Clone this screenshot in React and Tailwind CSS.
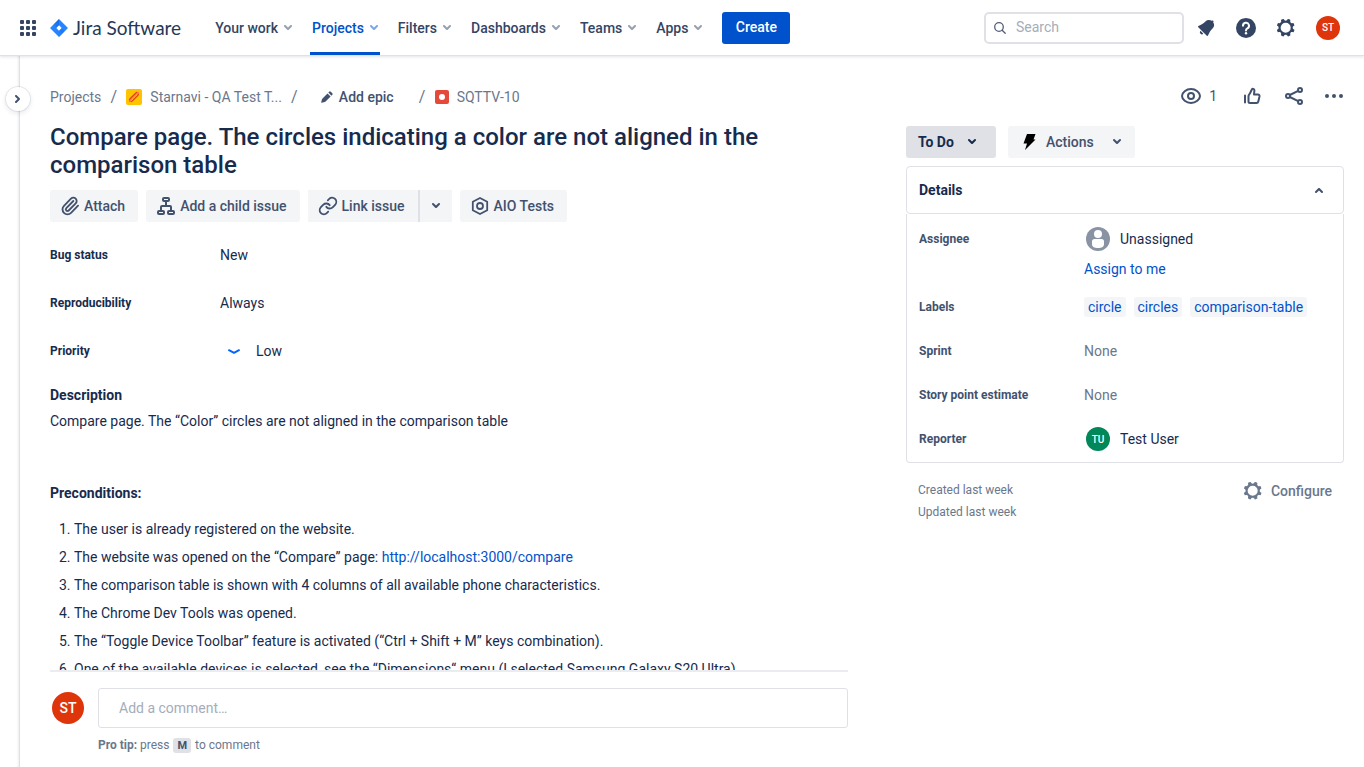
import React from "react";
import { Link as LinkIcon, Paperclip } from "lucide-react";

const navItems = ["Your work", "Projects", "Filters", "Dashboards", "Teams", "Apps"];

const steps = [
  <>The user is already registered on the website.</>,
  <>
    The website was opened on the “Compare” page:{" "}
    <a href="http://localhost:3000/compare" className="text-[#0052cc]">http://localhost:3000/compare</a>
  </>,
  <>The comparison table is shown with 4 columns of all available phone characteristics.</>,
  <>The Chrome Dev Tools was opened.</>,
  <>The “Toggle Device Toolbar” feature is activated (“Ctrl + Shift + M” keys combination).</>,
  <>One of the available devices is selected, see the “Dimensions“ menu (I selected Samsung Galaxy S20 Ultra).</>,
];

function Chevron({ className = "" }) {
  return (
    <svg viewBox="8 8 8 8" fill="currentColor" aria-hidden="true" className={`size-2 shrink-0 ${className}`}>
      <path d="M8.292 9.293a1.009 1.009 0 000 1.419l2.939 2.965c.218.215.5.322.779.322s.556-.107.769-.322l2.93-2.955a1.01 1.01 0 000-1.419.987.987 0 00-1.406 0l-2.298 2.317-2.307-2.327a.99.99 0 00-1.406 0z" />
    </svg>
  );
}

function Gear() {
  return (
    <svg viewBox="0 0 24 24" fill="currentColor" aria-hidden="true" className="size-6 shrink-0">
      <path
        fillRule="evenodd"
        d="M11.701 16.7a5.002 5.002 0 110-10.003 5.002 5.002 0 010 10.004m8.368-3.117a1.995 1.995 0 01-1.346-1.885c0-.876.563-1.613 1.345-1.885a.48.48 0 00.315-.574 8.947 8.947 0 00-.836-1.993.477.477 0 00-.598-.195 2.04 2.04 0 01-1.29.08 1.988 1.988 0 01-1.404-1.395 2.04 2.04 0 01.076-1.297.478.478 0 00-.196-.597 8.98 8.98 0 00-1.975-.826.479.479 0 00-.574.314 1.995 1.995 0 01-1.885 1.346 1.994 1.994 0 01-1.884-1.345.482.482 0 00-.575-.315c-.708.2-1.379.485-2.004.842a.47.47 0 00-.198.582A2.002 2.002 0 014.445 7.06a.478.478 0 00-.595.196 8.946 8.946 0 00-.833 1.994.48.48 0 00.308.572 1.995 1.995 0 011.323 1.877c0 .867-.552 1.599-1.324 1.877a.479.479 0 00-.308.57 8.99 8.99 0 00.723 1.79.477.477 0 00.624.194c.595-.273 1.343-.264 2.104.238.117.077.225.185.302.3.527.8.512 1.58.198 2.188a.473.473 0 00.168.628 8.946 8.946 0 002.11.897.474.474 0 00.57-.313 1.995 1.995 0 011.886-1.353c.878 0 1.618.567 1.887 1.353a.475.475 0 00.57.313 8.964 8.964 0 002.084-.883.473.473 0 00.167-.631c-.318-.608-.337-1.393.191-2.195.077-.116.185-.225.302-.302.772-.511 1.527-.513 2.125-.23a.477.477 0 00.628-.19 8.925 8.925 0 00.728-1.793.478.478 0 00-.314-.573"
      />
    </svg>
  );
}

function Header() {
  return (
    <header className="relative z-10 flex h-14 shrink-0 items-center border-b border-[#dfe1e6] bg-white pr-6 pl-5 text-[#344563] shadow-[0_1px_3px_rgba(9,30,66,0.12)]">
      <button aria-label="Switch to" className="shrink-0">
        <svg viewBox="0 0 16 16" fill="currentColor" className="size-4">
          {[0, 6, 12].map((y) => [0, 6, 12].map((x) => <rect key={`${x}-${y}`} x={x} y={y} width="4" height="4" rx="1" />))}
        </svg>
      </button>
      <a href="#home" className="ml-3 flex shrink-0 items-center gap-[5px] pl-0.5">
        <svg viewBox="0 0 18 18" aria-hidden="true" className="size-[18px]">
          <defs>
            <linearGradient id="fold" x1="0" y1="1" x2="1" y2="0">
              <stop offset="0" stopColor="#2684ff" />
              <stop offset="1" stopColor="#0052cc" />
            </linearGradient>
          </defs>
          <path fillRule="evenodd" fill="#2684ff" d="M9 .1 17.500 8.500a.7.7 0 0 1 0 1L9 17.900.5 9.500a.7.7 0 0 1 0-1zM9 6.300 6.300 9 9 11.700 11.700 9z" />
          <path fill="url(#fold)" d="M9 .1v6.200L6.200 9.100l-2.700-3.500z" opacity=".55" />
          <path fill="url(#fold)" d="M9 17.900v-6.200l2.800-2.800 2.700 3.500z" opacity=".3" />
        </svg>
        <span className="font-[Lato,sans-serif] text-[19px] leading-6 text-[#253858]">Jira Software</span>
      </a>
      <nav className="ml-6 flex h-full shrink-0 items-stretch">
        {navItems.map((item) => {
          const active = item === "Projects";
          return (
            <a
              key={item}
              href="#nav"
              className={`mx-2 flex items-center gap-1.5 border-b-[3px] px-0.5 pt-1 text-[14px] font-medium ${active ? "border-[#0052cc] text-[#0052cc]" : "border-transparent"}`}
            >
              {item}
              <Chevron className="opacity-50" />
            </a>
          );
        })}
      </nav>
      <button className="ml-2.5 h-8 w-17 shrink-0 rounded-[3px] bg-[#0052cc] text-[14px] font-medium text-white">Create</button>
      <label className="ml-auto flex h-8 w-50 items-center gap-2.5 rounded-[5px] border-2 border-[#dfe1e6] px-2">
        <svg viewBox="0 0 12 12" fill="none" stroke="#505f79" strokeWidth="1.3" strokeLinecap="round" aria-hidden="true" className="size-3 shrink-0">
          <circle cx="5" cy="5" r="4.300" />
          <path d="m8.200 8.200 3 3" />
        </svg>
        <input type="search" aria-label="Search" placeholder="Search" className="min-w-0 flex-1 bg-transparent text-[14px] outline-none placeholder:text-[#a5adba]" />
      </label>
      <div className="ml-2.5 flex shrink-0 items-center gap-4">
        <button aria-label="Notifications">
          <svg viewBox="0 0 24 24" fill="currentColor" className="size-6">
            <path d="M6.485 17.669a2 2 0 002.829 0l-2.829-2.83a2 2 0 000 2.83zm4.897-12.191l-.725.725c-.782.782-2.21 1.813-3.206 2.311l-3.017 1.509c-.495.248-.584.774-.187 1.171l8.556 8.556c.398.396.922.313 1.171-.188l1.51-3.016c.494-.988 1.526-2.42 2.311-3.206l.725-.726a5.048 5.048 0 00.64-6.356 1.01 1.01 0 10-1.354-1.494c-.023.025-.046.049-.066.075a5.043 5.043 0 00-2.788-.84 5.036 5.036 0 00-3.57 1.478z" />
          </svg>
        </button>
        <button aria-label="Help">
          <svg viewBox="0 0 24 24" className="size-6">
            <circle cx="12" cy="12" r="10" fill="currentColor" />
            <path d="M9 9.800a3 3 0 1 1 4.400 2.600c-.9.5-1.400.9-1.400 2" fill="none" stroke="#fff" strokeWidth="2" strokeLinecap="round" />
            <circle cx="12" cy="17.300" r="1.200" fill="#fff" />
          </svg>
        </button>
        <button aria-label="Settings"><Gear /></button>
        <button aria-label="Your profile" className="ml-0.5 flex size-6 items-center justify-center rounded-full bg-[#de350b] text-[10px] font-medium text-white">ST</button>
      </div>
    </header>
  );
}

function Slash() {
  return <span className="w-[25px] text-center text-[16px]">/</span>;
}

function Breadcrumbs() {
  return (
    <nav aria-label="Breadcrumbs" className="flex h-6 items-center text-[14px] text-[#6b778c]">
      <a href="#projects">Projects</a>
      <Slash />
      <a href="#project" className="flex items-center gap-2">
        <svg viewBox="0 0 16 16" aria-hidden="true" className="size-4">
          <rect width="16" height="16" rx="2" fill="#ffc400" />
          <path d="M5.200 10.800 10.800 5.200" stroke="#de350b" strokeWidth="4.400" strokeLinecap="round" />
          <path d="M4 12 12 4" stroke="#ff7452" strokeWidth="2.400" strokeLinecap="round" />
          <path d="m5 11.200 1.400-.4.4-1.600 1.600-.4.4-1.600 1.600-.4.4-1.600" stroke="#ffc400" strokeWidth=".8" fill="none" />
        </svg>
        Starnavi - QA Test T...
      </a>
      <Slash />
      <button className="ml-3.5 flex items-center gap-1.5 font-medium text-[#42526e]">
        <svg viewBox="0 0 12 12" fill="currentColor" aria-hidden="true" className="size-3">
          <path d="M8.200.7a1.200 1.200 0 0 1 1.600 0l1.500 1.500a1.200 1.200 0 0 1 0 1.600l-.9.9-3.100-3.100zM6.500 2.400l3.100 3.100-5 5-.9.5-3 .7a.4.4 0 0 1-.5-.5l.8-2.900.5-.9z" />
        </svg>
        Add epic
      </button>
      <span className="ml-4 flex"><Slash /></span>
      <a href="#issue" className="flex items-center gap-2">
        <svg viewBox="0 0 14 14" aria-hidden="true" className="size-[14px]">
          <rect width="14" height="14" rx="2" fill="#e5493a" />
          <circle cx="7" cy="7" r="3" fill="#fff" />
        </svg>
        SQTTV-10
      </a>
    </nav>
  );
}

const toolButton = "flex h-8 items-center gap-1 bg-[#f4f5f7] text-[14px] font-medium text-[#42526e]";

function Toolbar() {
  return (
    <div className="mt-[11px] flex flex-wrap gap-2">
      <button className={`${toolButton} rounded-[3px] pr-[13px] pl-2.5`}>
        <Paperclip aria-hidden="true" className="size-5" strokeWidth={2.2} />
        Attach
      </button>
      <button className={`${toolButton} rounded-[3px] pr-[13px] pl-2.5`}>
        <svg viewBox="0 0 20 20" fill="none" stroke="currentColor" strokeWidth="2" strokeLinejoin="round" aria-hidden="true" className="size-5">
          <rect x="7" y="2" width="6" height="3" rx="1" />
          <rect x="2" y="15" width="6" height="3" rx="1" />
          <rect x="12" y="15" width="6" height="3" rx="1" />
          <path d="M10 5v5M5 15v-4a1 1 0 0 1 1-1h8a1 1 0 0 1 1 1v4" />
        </svg>
        Add a child issue
      </button>
      <div className="flex gap-0.5 rounded-[3px] bg-[#dfe1e6]">
        <button className={`${toolButton} rounded-l-[3px] pr-[13px] pl-2.5`}>
          <LinkIcon aria-hidden="true" className="size-5" strokeWidth={2.2} />
          Link issue
        </button>
        <button aria-label="Link issue options" className={`${toolButton} rounded-r-[3px] px-3`}>
          <Chevron />
        </button>
      </div>
      <button className={`${toolButton} rounded-[3px] pr-[13px] pl-2.5`}>
        <svg viewBox="0 0 20 20" fill="none" stroke="currentColor" strokeWidth="1.800" strokeLinejoin="round" aria-hidden="true" className="size-5">
          <path d="m10 2 7.200 3.800v8.400L10 18l-7.200-3.800V5.800z" />
          <circle cx="10" cy="10" r="3" />
        </svg>
        AIO Tests
      </button>
    </div>
  );
}

function Field({ name, children }) {
  return (
    <div className="flex h-12 items-center">
      <dt className="w-[170px] shrink-0 text-[12px] font-bold">{name}</dt>
      <dd className="flex items-center text-[14px]">{children}</dd>
    </div>
  );
}

function CommentBar() {
  return (
    <footer className="shrink-0 border-t-2 border-[#ebecf0] pt-4 pb-3">
      <div className="flex items-center gap-3.5 pl-0.5">
        <span className="flex size-8 shrink-0 items-center justify-center rounded-full bg-[#de350b] text-[14px] font-medium text-white">ST</span>
        <input aria-label="Add a comment" placeholder="Add a comment…" className="h-10 min-w-0 flex-1 rounded-[3px] border border-[#dfe1e6] px-5 text-[14px] outline-none placeholder:text-[#a5adba]" />
      </div>
      <p className="mt-2 pl-12 text-[12px] leading-[18px] text-[#6b778c]">
        <strong>Pro tip:</strong> press{" "}
        <kbd className="mx-px rounded-[3px] bg-[#dfe1e6] px-1 py-px font-[Roboto,sans-serif] text-[11px] font-bold text-[#42526e]">M</kbd> to comment
      </p>
    </footer>
  );
}

function Issue() {
  return (
    <main className="flex min-h-0 min-w-0 flex-1 flex-col">
      <div className="min-h-0 flex-1 overflow-hidden">
        <div className="pt-[29px]">
          <Breadcrumbs />
        </div>
        <h1 className="mt-3.5 text-[24px] leading-7 font-medium">
          Compare page. The circles indicating a color are not aligned in the comparison table
        </h1>
        <Toolbar />
        <dl className="mt-[9px]">
          <Field name="Bug status">New</Field>
          <Field name="Reproducibility">Always</Field>
          <Field name="Priority">
            <svg viewBox="0 0 16 16" fill="none" stroke="#0065ff" strokeWidth="2" strokeLinecap="round" strokeLinejoin="round" aria-hidden="true" className="mr-3.5 ml-1.5 size-4">
              <path d="M3 7.200 8 9.800l5-2.600" />
            </svg>
            Low
          </Field>
        </dl>
        <h2 className="mt-2.5 text-[14px] leading-5 font-bold">Description</h2>
        <p className="mt-1.5 text-[14px] leading-5">Compare page. The “Color” circles are not aligned in the comparison table</p>
        <h3 className="mt-13 text-[14px] leading-5 font-bold">Preconditions:</h3>
        <ol className="mt-4 list-decimal space-y-2 pl-6 text-[14px] leading-5">
          {steps.map((step, i) => (
            <li key={i}>{step}</li>
          ))}
        </ol>
      </div>
      <CommentBar />
    </main>
  );
}

function Detail({ name, tall, children }) {
  return (
    <div className={`flex items-start ${tall ? "pb-1.5" : ""}`}>
      <dt className="flex h-11 w-[165px] shrink-0 items-center text-[12px] font-bold text-[#42526e]">{name}</dt>
      <dd className="min-w-0 flex-1 text-[14px]">{children}</dd>
    </div>
  );
}

function Sidebar() {
  return (
    <aside className="w-[438px] shrink-0 pt-7">
      <div className="flex h-6 items-center justify-end gap-5 text-[#42526e]">
        <button aria-label="Watch options" className="flex items-center gap-2 text-[14px]">
          <svg viewBox="0 0 20 20" fill="none" stroke="currentColor" strokeWidth="2" aria-hidden="true" className="size-5">
            <path d="M1 10c0-3.400 4.200-7 9-7s9 3.600 9 7-4.200 7-9 7-9-3.600-9-7z" />
            <circle cx="10" cy="10" r="3" />
          </svg>
          1
        </button>
        <button aria-label="Vote" className="mr-0.5 ml-[5px]">
          <svg viewBox="0 0 20 20" fill="none" stroke="currentColor" strokeWidth="2" strokeLinejoin="round" strokeLinecap="round" className="size-5">
            <path d="M3 9.500v7M6.500 10v5.500c0 1 .5 1.500 1.500 1.500h6.500c1 0 1.600-.5 1.800-1.500l1.200-5c.2-1.200-.4-2-1.500-2H12l.4-4.200c0-1.600-2-2-2.700-.6L8 7.200C7.400 8.300 6.500 9 6.500 10z" />
          </svg>
        </button>
        <button aria-label="Share">
          <svg viewBox="0 0 20 20" fill="none" stroke="currentColor" strokeWidth="2" className="size-5">
            <circle cx="4" cy="10" r="2" />
            <circle cx="16" cy="4" r="2" />
            <circle cx="16" cy="16" r="2" />
            <path d="m5.800 9 8.400-4.200M5.800 11l8.400 4.200" />
          </svg>
        </button>
        <button aria-label="Actions">
          <svg viewBox="0 0 20 20" fill="currentColor" className="size-5">
            <circle cx="3" cy="10" r="2" />
            <circle cx="10" cy="10" r="2" />
            <circle cx="17" cy="10" r="2" />
          </svg>
        </button>
      </div>
      <div className="mt-[18px] flex gap-3 text-[14px]">
        <button className="flex h-8 items-center gap-3.5 rounded-[3px] bg-[#dfe1e6] pr-5 pl-3 font-bold">
          To Do <Chevron />
        </button>
        <button className="flex h-8 items-center rounded-[3px] bg-[#f4f5f7] px-3.5 font-medium text-[#42526e]">
          <svg viewBox="0 0 14 18" fill="#000" aria-hidden="true" className="mr-2.5 h-[18px] w-[14px]">
            <path d="M5 1h8.500l-2 5.500h2L3 17l2-6.500H1.500z" />
          </svg>
          Actions
          <Chevron className="ml-[19px]" />
        </button>
      </div>
      <section className="mt-2">
        <h2>
          <button aria-expanded="true" className="flex h-12 w-full items-center justify-between rounded-[4px] border border-[#dfe1e6] pr-5 pl-3 text-[14px] font-bold">
            Details
            <Chevron className="rotate-180 text-[#42526e]" />
          </button>
        </h2>
        <dl className="rounded-b-[4px] border-x border-b border-[#dfe1e6] px-3 pt-[3px] pb-px">
          <Detail name="Assignee" tall>
            <div className="flex h-11 items-center gap-2.5 pl-0.5">
              <svg viewBox="0 0 24 24" aria-hidden="true" className="size-6">
                <circle cx="12" cy="12" r="12" fill="#8993a4" />
                <circle cx="12" cy="7" r="4" fill="#fff" />
                <path d="M6 14.500A2.500 2.500 0 0 1 8.500 12h7a2.500 2.500 0 0 1 2.500 2.500V17c0 3-2.500 4-6 4s-6-1-6-4z" fill="#fff" />
              </svg>
              Unassigned
            </div>
            <button className="-mt-0.5 block h-5 leading-5 text-[#0052cc]">Assign to me</button>
          </Detail>
          <Detail name="Labels">
            <div className="flex h-11 items-center gap-2">
              {["circle", "circles", "comparison-table"].map((label) => (
                <a key={label} href="#label" className="rounded-[3px] bg-[#f4f5f7] px-1 leading-5 text-[#0052cc]">{label}</a>
              ))}
            </div>
          </Detail>
          <Detail name="Sprint">
            <div className="flex h-11 items-center text-[#6b778c]">None</div>
          </Detail>
          <Detail name="Story point estimate">
            <div className="flex h-11 items-center text-[#6b778c]">None</div>
          </Detail>
          <Detail name="Reporter">
            <div className="flex h-11 items-center gap-2.5 pl-0.5">
              <span className="flex size-6 items-center justify-center rounded-full bg-[#00875a] text-[10px] font-medium text-white">TU</span>
              Test User
            </div>
          </Detail>
        </dl>
      </section>
      <div className="mt-4 flex items-start justify-between px-3 text-[#6b778c]">
        <div className="text-[12px] leading-[22px]">
          <p>Created last week</p>
          <p>Updated last week</p>
        </div>
        <button className="flex items-center gap-1.5 text-[14px] font-medium">
          <Gear />
          Configure
        </button>
      </div>
    </aside>
  );
}

export default function App() {
  return (
    <div className="flex h-screen flex-col overflow-hidden bg-white font-[Roboto,sans-serif] text-[#172b4d]">
      <Header />
      <div className="flex min-h-0 flex-1">
        <div className="relative w-5 shrink-0 border-r border-[#dfe1e6] shadow-[inset_-2px_0_2px_-1px_rgba(9,30,66,0.08)]">
          <button aria-label="Expand sidebar" className="absolute top-[31px] left-1.5 flex size-6 items-center justify-center rounded-full bg-white shadow-[0_0_0_1px_rgba(9,30,66,0.08),0_2px_4px_1px_rgba(9,30,66,0.08)]">
            <Chevron className="-rotate-90 text-[#42526e]" />
          </button>
        </div>
        <div className="flex min-h-0 flex-1 gap-[58px] pr-5 pl-[30px]">
          <Issue />
          <Sidebar />
        </div>
      </div>
    </div>
  );
}
